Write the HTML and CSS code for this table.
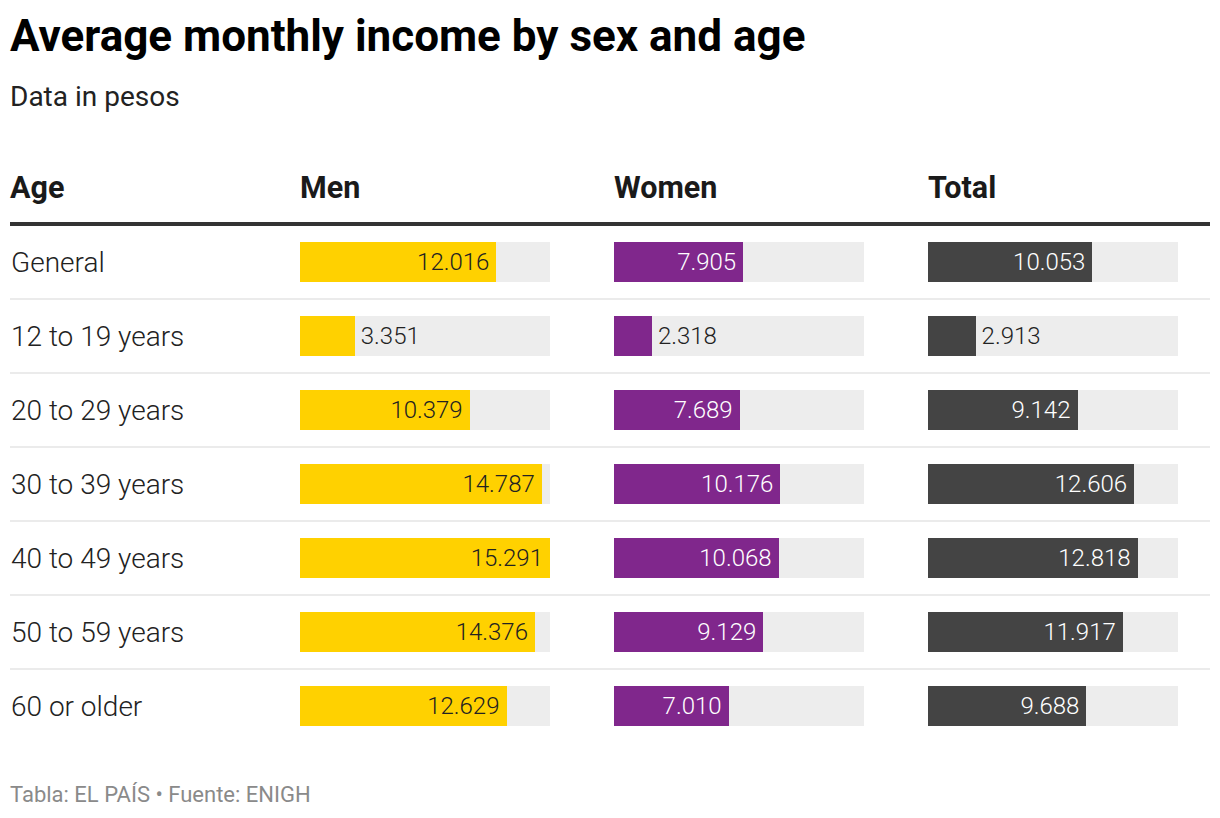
FILE: index.html
```html
<!DOCTYPE html>
<html lang="en">
<head>
<meta charset="utf-8">
<title>Average monthly income by sex and age</title>
<link rel="stylesheet" href="styles.css">
</head>
<body>
<div class="page">
  <h1 class="title">Average monthly income by sex and age</h1>
  <p class="subtitle">Data in pesos</p>

  <div class="table">
    <div class="row head">
      <div class="cell">Age</div>
      <div class="cell">Men</div>
      <div class="cell">Women</div>
      <div class="cell">Total</div>
    </div>

    <div class="row">
      <div class="cell label">General</div>
      <div class="cell"><div class="track"><div class="fill men" style="width:196.4px"><span class="val">12.016</span></div></div></div>
      <div class="cell"><div class="track"><div class="fill women" style="width:129.2px"><span class="val">7.905</span></div></div></div>
      <div class="cell"><div class="track"><div class="fill total" style="width:164.4px"><span class="val">10.053</span></div></div></div>
    </div>

    <div class="row">
      <div class="cell label">12 to 19 years</div>
      <div class="cell"><div class="track"><div class="fill men" style="width:54.8px"></div><span class="val out">3.351</span></div></div>
      <div class="cell"><div class="track"><div class="fill women" style="width:37.9px"></div><span class="val out">2.318</span></div></div>
      <div class="cell"><div class="track"><div class="fill total" style="width:47.6px"></div><span class="val out">2.913</span></div></div>
    </div>

    <div class="row">
      <div class="cell label">20 to 29 years</div>
      <div class="cell"><div class="track"><div class="fill men" style="width:169.7px"><span class="val">10.379</span></div></div></div>
      <div class="cell"><div class="track"><div class="fill women" style="width:125.7px"><span class="val">7.689</span></div></div></div>
      <div class="cell"><div class="track"><div class="fill total" style="width:149.5px"><span class="val">9.142</span></div></div></div>
    </div>

    <div class="row">
      <div class="cell label">30 to 39 years</div>
      <div class="cell"><div class="track"><div class="fill men" style="width:241.8px"><span class="val">14.787</span></div></div></div>
      <div class="cell"><div class="track"><div class="fill women" style="width:166.4px"><span class="val">10.176</span></div></div></div>
      <div class="cell"><div class="track"><div class="fill total" style="width:206.1px"><span class="val">12.606</span></div></div></div>
    </div>

    <div class="row">
      <div class="cell label">40 to 49 years</div>
      <div class="cell"><div class="track"><div class="fill men" style="width:250px"><span class="val">15.291</span></div></div></div>
      <div class="cell"><div class="track"><div class="fill women" style="width:164.6px"><span class="val">10.068</span></div></div></div>
      <div class="cell"><div class="track"><div class="fill total" style="width:209.6px"><span class="val">12.818</span></div></div></div>
    </div>

    <div class="row">
      <div class="cell label">50 to 59 years</div>
      <div class="cell"><div class="track"><div class="fill men" style="width:235.0px"><span class="val">14.376</span></div></div></div>
      <div class="cell"><div class="track"><div class="fill women" style="width:149.3px"><span class="val">9.129</span></div></div></div>
      <div class="cell"><div class="track"><div class="fill total" style="width:194.8px"><span class="val">11.917</span></div></div></div>
    </div>

    <div class="row last">
      <div class="cell label">60 or older</div>
      <div class="cell"><div class="track"><div class="fill men" style="width:206.5px"><span class="val">12.629</span></div></div></div>
      <div class="cell"><div class="track"><div class="fill women" style="width:114.6px"><span class="val">7.010</span></div></div></div>
      <div class="cell"><div class="track"><div class="fill total" style="width:158.4px"><span class="val">9.688</span></div></div></div>
    </div>
  </div>

  <p class="footer">Tabla: EL PAÍS • Fuente: ENIGH</p>
</div>
</body>
</html>
```

FILE: styles.css
```css
* { box-sizing: border-box; }

html, body {
  margin: 0;
  padding: 0;
  background: #ffffff;
}

body {
  font-family: Roboto, "Liberation Sans", sans-serif;
  color: #222222;
}

.page {
  width: 1220px;
  padding: 10px 10px 0 10px;
}

.title {
  margin: 0;
  font-size: 44px;
  line-height: 52px;
  font-weight: 700;
  color: #000000;
}

.subtitle {
  margin: 18px 0 0 0;
  font-size: 28px;
  line-height: 34px;
  font-weight: 400;
  color: #222222;
}

.table {
  margin-top: 56px;
  width: 1200px;
}

.row {
  display: grid;
  grid-template-columns: 290px 314px 314px 282px;
  align-items: center;
  height: 74px;
  border-bottom: 2px solid #ebebeb;
}

.row.head {
  height: 56px;
  align-items: start;
  border-bottom: 4px solid #333333;
  font-size: 30.5px;
  line-height: 36px;
  font-weight: 700;
  color: #1a1a1a;
}

.row.last {
  border-bottom: none;
  height: 72px;
}

.label {
  font-size: 28px;
  font-weight: 300;
  color: #222222;
  padding-left: 1px;
}

.track {
  position: relative;
  display: flex;
  align-items: center;
  width: 250px;
  height: 40px;
  background: #ededed;
}

.fill {
  height: 40px;
  display: flex;
  align-items: center;
  justify-content: flex-end;
  padding-right: 7px;
  flex: none;
}

.fill.men { background: #ffd100; color: #222222; }
.fill.women { background: #80278c; color: #ffffff; }
.fill.total { background: #444444; color: #ffffff; }

.val {
  font-size: 24px;
  font-weight: 300;
  line-height: 40px;
  white-space: nowrap;
}

.val.out {
  color: #222222;
  padding-left: 6px;
}

.footer {
  margin: 40px 0 0 0;
  font-size: 22px;
  line-height: 26px;
  color: #8a8a8a;
  font-weight: 400;
}
```
